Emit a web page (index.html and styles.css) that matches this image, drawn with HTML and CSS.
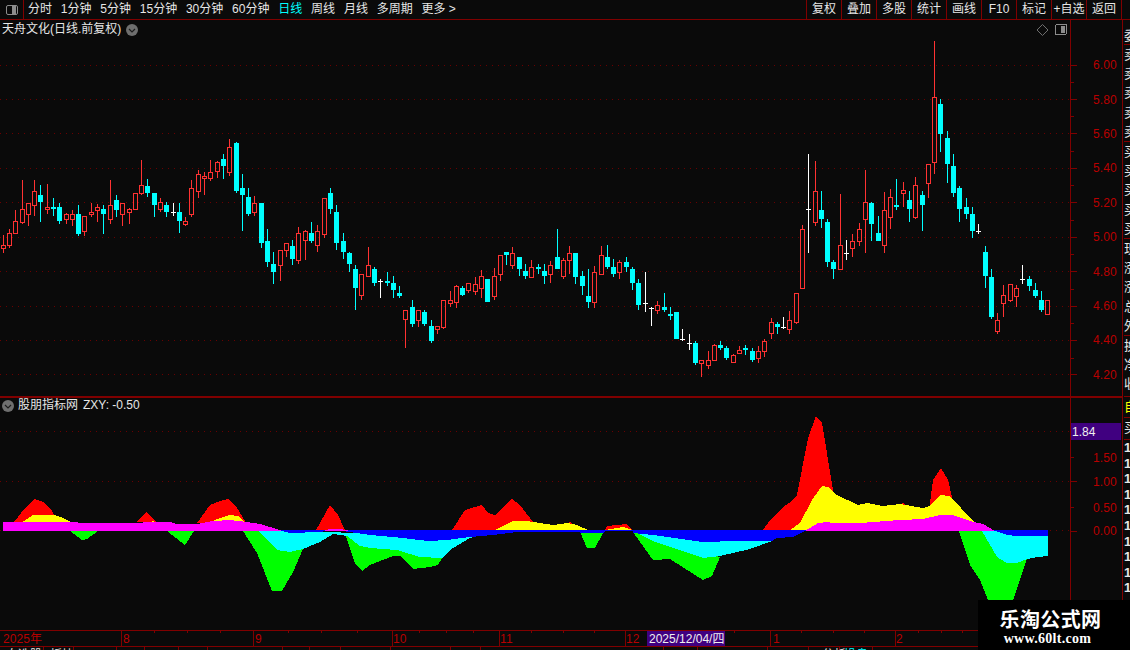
FILE: index.html
```html
<!DOCTYPE html>
<html lang="zh">
<head>
<meta charset="utf-8">
<title>天舟文化 日线</title>
<link rel="stylesheet" href="styles.css">
</head>
<body>
<div class="app">
  <header class="toolbar">
    <div class="corner"><span class="split-icon"></span></div>
    <nav class="periods">
      <span>分时</span><span>1分钟</span><span>5分钟</span><span>15分钟</span><span>30分钟</span><span>60分钟</span>
      <span class="active">日线</span><span>周线</span><span>月线</span><span>多周期</span><span>更多 &gt;</span>
    </nav>
    <div class="actions">
      <span>复权</span><span>叠加</span><span>多股</span><span>统计</span><span>画线</span><span>F10</span><span>标记</span><span>+自选</span><span>返回</span>
    </div>
  </header>
  <div class="workspace">
    <main class="charts">
      <section class="panel panel-main">
        <svg class="plot" width="1122" height="376" viewBox="0 20 1122 376" shape-rendering="crispEdges">
          <g class="grid">
            <path d="M0 65H1070M0 99.5H1070M0 133.5H1070M0 168.5H1070M0 202.5H1070M0 237.5H1070M0 271.5H1070M0 306.5H1070M0 340.5H1070M0 374.5H1070"/>
          </g>
          <g id="candles"></g>
          <rect class="rule" x="1070" y="20" width="1" height="376"/>
          <path class="tick" d="M1071 65H1077M1071 82H1074M1071 99.5H1077M1071 116H1074M1071 133.5H1077M1071 151H1074M1071 168.5H1077M1071 185H1074M1071 202.5H1077M1071 220H1074M1071 237.5H1077M1071 254H1074M1071 271.5H1077M1071 289H1074M1071 306.5H1077M1071 323H1074M1071 340.5H1077M1071 358H1074M1071 374.5H1077"/>
          <g class="price">
            <text x="1093" y="69">6.00</text><text x="1093" y="104">5.80</text><text x="1093" y="138">5.60</text><text x="1093" y="172">5.40</text><text x="1093" y="207">5.20</text><text x="1093" y="241">5.00</text><text x="1093" y="276">4.80</text><text x="1093" y="310">4.60</text><text x="1093" y="344">4.40</text><text x="1093" y="379">4.20</text>
          </g>
          <path class="diamond" d="M1042.5 24.5L1048 30L1042.5 35.500L1037 30Z"/>
          <rect class="corner-frame" x="1055.500" y="24.500" width="11" height="10" rx="1.500"/>
          <rect class="corner-fill" x="1061" y="26" width="4" height="7"/>
        </svg>
        <div class="panel-title">
          <span>天舟文化(日线.前复权)</span>
          <svg class="chev" width="12" height="12" viewBox="0 0 12 12"><circle cx="6" cy="6" r="6"/><path d="M3 5L6 8L9 5"/></svg>
        </div>
      </section>
      <section class="panel panel-ind">
        <svg class="plot" width="1122" height="232" viewBox="0 398 1122 232" shape-rendering="crispEdges">
          <path class="grid-line" d="M0 431.500H1070M0 481.500H1070M0 530.500H1070"/>
          <g class="red">
            <polygon points="14,522 25,508 35,499 43,502 50,508 55,516 57,522"/>
            <polygon points="136,522 146,512 157,522"/>
            <polygon points="197,523 210,505 220,501 228,499 237,508 245,521 245,523"/>
            <polygon points="316,530 330,505 338,515 345,530"/>
            <polygon points="452,530 465,510 482,505 488,513 495,515 512,499 520,505 533,522 540,530"/>
            <polygon points="568,524 570,521 572,524"/>
            <polygon points="605,530 607,526 627,524 630,528 632,530"/>
            <polygon points="763,530 770,520 782,508 793,500 797,495 808,438 816,416 822,423 833,490 833,530"/>
            <polygon points="901,505 903,502 905,505"/>
            <polygon points="929,510 933,480 941,468 948,480 952,497 952,510"/>
          </g>
          <g class="yellow">
            <polygon points="21,523 33,515 55,515 63,518 73,523"/>
            <polygon points="151,523 152,521 156,522 158,523"/>
            <polygon points="208,523 220,518 230,515 238,516 245,523"/>
            <polygon points="495,530 513,521 527,521 540,523 553,525 568,523 577,525 588,530"/>
            <polygon points="605,530 623,527 633,530"/>
            <polygon points="790,530 800,523 812,500 822,486 828,487 837,495 858,505 867,503 883,506 900,504 923,508 930,506 940,495 950,496 972,520 985,530"/>
          </g>
          <g class="green">
            <polygon points="70,531 82,540 87,539 98,531"/>
            <polygon points="167,531 185,545 194,531"/>
            <polygon points="243,531 257,553 272,591 282,591 293,572 303,549 258,531"/>
            <polygon points="345,533 355,563 362,571 370,565 393,556 400,556 413,569 430,567 438,565 442,558 370,540"/>
            <polygon points="580,532 587,548 595,548 603,533"/>
            <polygon points="633,532 653,560 670,559 703,580 712,576 720,557"/>
            <polygon points="959,531 970,565 980,580 988,600 1013,600 1027,559 1027,531"/>
          </g>
          <g class="cyan">
            <polygon points="258,531 277,550 290,552 303,549 320,542 333,534 347,536 360,546 370,548 397,550 420,557 442,558 453,548 470,538 479,535"/>
            <polygon points="635,532 653,541 703,558 720,556 750,549 772,541"/>
            <polygon points="982,531 997,557 1007,563 1017,563 1027,559 1038,557 1048,556 1048,531"/>
          </g>
          <polygon class="blue" points="278,530 1048,530 1048,536 1017,536 1007,535 995,531 805,531 793,537 777,538 772,541 737,541 703,542 653,535 633,533 633,531 606,531 603,533 580,533 580,532 517,532 493,535 470,537 447,540 428,541 403,538 370,535 350,532 333,530 320,532 290,533"/>
          <g class="magenta">
            <polygon points="3,522 73,522 82,523 140,523 145,522 170,522 177,524 197,524 213,521 230,520 247,522 260,524 277,529 282,531 3,531"/>
            <polygon points="325,530 330,529 340,529 350,531 325,531"/>
            <polygon points="805,531 818,523 827,522 833,523 860,523 900,520 923,519 940,515 953,515 970,521 983,524 995,531"/>
          </g>
          <rect class="rule" x="1070" y="398" width="1" height="232"/>
          <path class="tick" d="M1071 457.500H1074M1071 481.500H1077M1071 507.500H1074M1071 531.500H1077"/>
          <rect class="value-box" x="1071" y="423" width="50" height="17"/>
          <text class="value-text" x="1072" y="436">1.84</text>
          <g class="price">
            <text x="1093" y="462">1.50</text><text x="1093" y="486">1.00</text><text x="1093" y="512">0.50</text><text x="1093" y="535">0.00</text>
          </g>
        </svg>
        <div class="panel-title panel-title-ind">
          <svg class="chev" width="12" height="12" viewBox="0 0 12 12"><circle cx="6" cy="6" r="6"/><path d="M3 5L6 8L9 5"/></svg>
          <span>股朋指标网</span>
          <span>ZXY: -0.50</span>
        </div>
      </section>
      <footer class="timeline">
        <svg class="plot" width="1122" height="20" viewBox="0 630 1122 20" shape-rendering="crispEdges">
          <path class="axis-line" d="M0 630.500H1122M0 646.500H1122"/>
          <path class="axis-line" d="M121.500 630V646M253.500 630V646M392.500 630V646M499.500 630V646M625.500 630V646M770.500 630V646M895.500 630V646"/>
          <path class="axis-line" d="M154.500 630V633M187.500 630V633M220.500 630V633M288.500 630V633M321.500 630V633M357.500 630V633M419.500 630V633M446.500 630V633M473.500 630V633M531.500 630V633M563.500 630V633M594.500 630V633M663.500 630V633M697.500 630V633M734.500 630V633M801.500 630V633M833.500 630V633M864.500 630V633M918.500 630V633M941.500 630V633M962.500 630V633"/>
          <path class="axis-line" d="M43.500 646V650M73.500 646V650M116.500 646V650M144.500 646V650M178.500 646V650M207.500 646V650M282.500 646V650M309.500 646V650M340.500 646V650M390.500 646V650M450.500 646V650M480.500 646V650M663.500 646V650M697.500 646V650M767.500 646V650M808.500 646V650M839.500 646V650M872.500 646V650"/>
          <g class="date">
            <text x="3" y="643">2025年</text><text x="123" y="643">8</text><text x="255" y="643">9</text><text x="393" y="643">10</text><text x="500" y="643">11</text><text x="626" y="643">12</text><text x="773" y="643">1</text><text x="896" y="643">2</text>
          </g>
          <rect class="value-box" x="647" y="631" width="78" height="15"/>
          <text class="value-text" x="649" y="643">2025/12/04/四</text>
          <text class="tab-text" x="6" y="659">自选股</text>
          <text class="tab-text" x="50" y="659">板块</text>
          <text class="tab-text" x="822" y="659">分析</text>
          <text class="tab-text tab-active" x="844" y="659">操盘</text>
        </svg>
      </footer>
    </main>
    <aside class="side">
      <div class="side-group side-first"><span>委</span></div>
      <div class="side-group"><span>卖</span><span>卖</span><span>卖</span><span>卖</span><span>卖</span></div>
      <div class="side-group"><span>买</span><span>买</span><span>买</span><span>买</span><span>买</span></div>
      <div class="side-group"><span>现</span><span>涨</span><span>涨</span><span>总</span><span>外</span></div>
      <div class="side-group side-last"><span>换</span><span>净</span><span>收</span></div>
      <div class="side-group side-mark"><span>自</span></div>
      <div class="side-group side-sub"><span>买</span></div>
      <div class="side-nums"><span>1</span><span>1</span><span>1</span><span>1</span><span>1</span><span>1</span><span>1</span><span>1</span><span>1</span><span>1</span></div>
    </aside>
  </div>
  <div class="watermark">
    <strong>乐淘公式网</strong>
    <em>www.60lt.com</em>
  </div>
</div>
<script src="script.js"></script>
</body>
</html>
```
FILE: styles.css
```css
* { box-sizing: border-box; }
html, body { margin: 0; padding: 0; background: #0a0a0a; }
body { font-family: "Liberation Sans", "Noto Sans CJK SC", sans-serif; font-size: 12px; color: #e6e6e6; }
.app { position: relative; width: 1130px; height: 650px; overflow: hidden; display: flex; flex-direction: column; }

.toolbar { display: flex; height: 20px; flex: none; border-bottom: 1px solid #800000; line-height: 19px; }
.corner { width: 24px; border-right: 1px solid #800000; display: flex; align-items: center; justify-content: center; }
.split-icon { display: block; width: 12px; height: 10px; border: 1px solid #8c8c8c; border-radius: 2px; background: linear-gradient(90deg, #0a0a0a 0 5px, #8c8c8c 5px 9px, #0a0a0a 9px); }
.periods { display: flex; gap: 8.8px; padding-left: 4px; flex: 1; white-space: nowrap; }
.active { color: #00ffff; }
.actions { display: flex; margin-right: 8px; border-right: 1px solid #800000; }
.actions span { width: 35px; border-left: 1px solid #800000; text-align: center; white-space: nowrap; }

.workspace { display: flex; flex: 1; min-height: 0; }
.charts { width: 1123px; flex: none; border-right: 1px solid #800000; display: flex; flex-direction: column; }
.panel { position: relative; flex: none; }
.panel-main { height: 378px; border-bottom: 2px solid #800000; }
.panel-ind { height: 232px; }
.timeline { height: 20px; flex: none; overflow: hidden; }
.plot { display: block; }

.panel-title { position: absolute; left: 2px; top: 2px; display: flex; align-items: center; gap: 5px; line-height: 15px; white-space: nowrap; }
.panel-title-ind { top: 0; gap: 4px; }
.panel-title-ind span + span { margin-left: 1px; }
.chev circle { fill: #6e6e6e; }
.chev path { fill: none; stroke: #1c1c1c; stroke-width: 1.2; }

.grid path, .grid-line { fill: none; stroke: #6a0000; stroke-width: 1; stroke-dasharray: 1 5; }
.rule { fill: #800000; }
.tick, .axis-line { fill: none; stroke: #800000; stroke-width: 1; }
.price text, .date text { fill: #b80000; font-size: 12px; letter-spacing: 0.1px; }
.diamond { fill: none; stroke: #6e6e6e; shape-rendering: auto; }
.corner-frame { fill: none; stroke: #8c8c8c; }
.corner-fill { fill: #8c8c8c; }
.value-box { fill: #400080; }
.value-text { fill: #f0f0f0; font-size: 12px; }
.tab-text { fill: #e6e6e6; font-size: 12px; }
.tab-active { fill: #00ffff; }

.red { fill: #ff0000; }
.yellow { fill: #ffff00; }
.green { fill: #00ff00; }
.cyan { fill: #00ffff; }
.blue { fill: #0000ff; }
.magenta { fill: #ff00ff; }
.up { fill: none; stroke: #ff3232; }
.up-wick { fill: #ff3232; }
.down { fill: #00ffff; }
.flat { fill: #ffffff; }

.side { flex: 1; overflow: hidden; display: flex; flex-direction: column; padding-left: 1px; line-height: 16px; font-size: 13px; }
.side-group { display: flex; flex-direction: column; flex: none; height: 97px; border-bottom: 1px solid #800000; white-space: nowrap; }
.side-group span { height: 19.2px; line-height: 19px; }
.side-first { height: 25px; padding-top: 6px; }
.side-last { height: 61px; }
.side-mark { height: 21px; color: #ffff00; }
.side-sub { height: 22px; }
.side-nums { display: flex; flex-direction: column; }
.side-nums span { height: 15.6px; font-weight: bold; }

.watermark { position: absolute; right: 0; bottom: 0; width: 152px; height: 50px; background: #000; display: flex; flex-direction: column; align-items: center; padding-top: 6px; color: #fff; }
.watermark strong { font-size: 20px; line-height: 25px; font-family: "Noto Sans CJK SC", sans-serif; font-weight: bold; letter-spacing: 0.4px; margin-left: -7px; }
.watermark em { font-family: "Liberation Serif", serif; font-weight: bold; font-style: normal; font-size: 14px; line-height: 15px; letter-spacing: 0.3px; margin-left: -13px; }
```
FILE: script.js
```js
// [x, high, low, bodyTop, bodyBottom, kind] in 3x sample units, per segment origin.
var segments = [
  { ox: 0, oy: 160, rows: [
    [10,225,278,256,266,'R'],[28,208,263,220,257,'R'],[46,150,222,184,221,'R'],[67,60,192,148,188,'R'],[85,130,198,130,164,'R'],[103,60,168,94,137,'R'],
    [121,75,186,105,126,'C'],[142,72,162,142,149,'R'],[160,114,168,141,147,'C'],[178,129,192,141,183,'C'],[199,159,192,163,179,'R'],[217,150,198,163,179,'R'],
    [235,136,228,162,222,'C'],[253,168,228,169,215,'R'],[274,129,171,157,164,'R'],[292,132,186,141,152,'R'],[310,135,222,147,162,'C'],[331,60,192,136,179,'R'],
    [349,105,171,120,150,'C'],[367,129,198,130,164,'R'],[388,145,192,148,158,'R'],[406,99,150,100,149,'R'],[424,0,104,76,101,'R'],[442,57,111,78,99,'C'],
    [463,99,171,99,135,'C'],[481,114,156,127,150,'R'],[499,126,171,135,156,'C'],[520,129,168,157,157,'W'],[538,129,219,156,183,'C'],[556,171,198,184,194,'R'],
    [574,60,171,85,164,'R'],[595,30,114,43,95,'R'],[613,37,105,49,56,'R'],[631,0,63,37,56,'R'],[652,3,54,7,35,'R'],[670,-18,57,-3,18,'C'],[688,-63,48,-39,38,'R'],
    [709,-54,99,-51,93,'C'],[727,42,213,84,105,'C'],[745,84,168,111,162,'C'],[763,108,168,130,159,'R'],[784,129,264,129,249,'C'],[802,207,321,243,306,'C'],
    [820,276,372,312,336,'C'],[841,270,363,271,318,'R'],[859,249,291,250,273,'R'],[877,240,315,258,297,'C'],[895,201,312,220,303,'R'],[916,210,300,213,243,'R'],
    [934,186,249,219,243,'C'],[952,195,276,213,258,'R'],[973,114,234,115,224,'R'],[991,84,162,99,147,'C'],[1009,135,270,156,249,'C'],[1030,219,297,243,276,'C'],
    [1048,276,336,279,312,'C'],[1066,315,450,327,384,'C'],[1084,342,420,343,408,'R'],[1105,261,352,316,351,'R']
  ]},
  { ox: 370, oy: 220, rows: [
    [13,141,198,147,189,'C'],[31,177,234,184,184,'W'],[52,156,198,183,189,'C'],[70,168,234,189,210,'C'],[88,198,234,219,228,'C'],[106,270,384,270,300,'R'],
    [127,240,321,261,312,'C'],[145,270,321,270,303,'R'],[163,270,318,276,312,'C'],[184,300,369,318,363,'C'],[202,318,342,318,330,'R'],[220,240,327,240,324,'R'],
    [241,213,261,240,252,'R'],[259,195,264,198,249,'R'],[277,198,228,204,225,'C'],[295,189,219,189,213,'R'],[316,171,225,192,216,'R'],[334,150,234,168,207,'R'],
    [352,177,246,177,246,'C'],[373,144,240,168,231,'R'],[391,105,183,105,165,'R'],[409,96,135,96,105,'C'],[427,81,147,99,138,'R'],[448,111,168,111,147,'C'],
    [466,132,177,153,168,'C'],[484,120,174,141,174,'R'],[505,132,162,141,147,'C'],[523,132,192,153,168,'C'],[541,123,189,135,165,'R'],[562,27,147,111,147,'C'],
    [580,114,177,120,171,'R'],[598,78,162,99,123,'R'],[616,99,192,99,171,'C'],[637,153,225,168,198,'C'],[655,147,264,228,246,'C'],[673,138,264,156,249,'R'],
    [694,78,165,105,165,'R'],[712,75,147,111,141,'C'],[730,117,171,141,162,'C'],[748,120,177,126,159,'R'],[769,111,156,126,141,'C'],[787,141,210,147,189,'C'],
    [805,177,270,189,255,'C'],[826,156,276,250,250,'W'],[844,261,318,265,265,'W'],[862,243,282,255,273,'R'],[883,219,276,261,270,'C'],[901,261,300,283,285,'C'],
    [919,276,357,276,357,'C'],[937,327,363,358,358,'W'],[958,342,390,370,370,'W'],[976,363,435,369,429,'C'],[994,420,471,420,432,'R'],[1015,393,447,420,438,'R'],
    [1033,372,423,375,423,'R'],[1051,363,390,375,384,'C'],[1069,378,420,384,414,'C'],[1090,402,429,405,429,'R'],[1108,378,402,391,402,'R']
  ]},
  { ox: 740, oy: 140, rows: [
    [16,615,645,624,630,'C'],[37,624,666,633,660,'C'],[55,618,669,633,657,'R'],[73,597,651,603,636,'R'],[94,534,597,546,582,'R'],[112,546,582,552,561,'C'],
    [130,531,567,560,560,'W'],[148,513,582,540,570,'R'],[169,459,552,459,549,'R'],[187,255,447,267,447,'R'],[205,42,339,208,208,'W'],[226,63,258,153,249,'R'],
    [244,153,264,210,237,'C'],[262,237,381,246,366,'C'],[280,360,417,366,387,'C'],[301,162,390,315,390,'R'],[319,300,360,338,338,'W'],[337,282,351,303,327,'R'],
    [358,249,318,267,306,'R'],[376,90,339,186,240,'R'],[394,186,303,189,252,'C'],[415,228,303,279,303,'C'],[433,156,339,210,318,'R'],[451,147,267,171,234,'R'],
    [469,117,210,195,201,'C'],[490,126,201,150,162,'R'],[508,153,246,180,207,'C'],[526,111,237,135,234,'R'],[547,153,273,165,195,'C'],[565,72,174,72,132,'R'],
    [583,-297,102,-129,68,'R'],[601,-123,36,-108,-18,'C'],[622,-27,129,-6,72,'C'],[640,42,171,78,159,'C'],[658,138,246,144,207,'C'],[679,174,237,201,222,'C'],
    [697,201,294,222,273,'C'],[715,252,282,274,274,'W'],[736,318,444,336,408,'C'],[754,387,537,411,531,'C'],[772,519,582,540,576,'R'],[790,435,531,465,492,'R'],
    [811,432,486,432,483,'R'],[829,435,501,444,471,'R'],[847,375,432,418,418,'W'],[868,408,453,417,438,'C'],[886,429,474,450,468,'C'],[904,453,516,480,510,'C'],[922,480,525,481,525,'R']
  ]}
];

var NS = 'http://www.w3.org/2000/svg';
var layer = document.getElementById('candles');

function rect(cls, x, y, w, h) {
  if (h <= 0) return;
  var r = document.createElementNS(NS, 'rect');
  r.setAttribute('class', cls);
  r.setAttribute('x', x);
  r.setAttribute('y', y);
  r.setAttribute('width', w);
  r.setAttribute('height', h);
  layer.appendChild(r);
}

segments.forEach(function (seg) {
  seg.rows.forEach(function (c) {
    var cx = Math.floor(seg.ox + c[0] / 3);
    var hi = Math.round(seg.oy + c[1] / 3);
    var lo = Math.round(seg.oy + c[2] / 3);
    var top = Math.round(seg.oy + c[3] / 3);
    var bot = Math.round(seg.oy + c[4] / 3);
    if (c[5] === 'W') {
      rect('flat', cx, hi, 1, lo - hi);
      rect('flat', cx - 2, top, 5, 1);
    } else if (c[5] === 'C') {
      rect('down', cx, hi, 1, lo - hi);
      rect('down', cx - 2, top, 5, Math.max(bot - top, 2));
    } else {
      rect('up-wick', cx, hi, 1, top - hi);
      rect('up-wick', cx, bot, 1, lo - bot);
      rect('up', cx - 1.5, top + 0.5, 4, Math.max(bot - top - 1, 1));
    }
  });
});
```
